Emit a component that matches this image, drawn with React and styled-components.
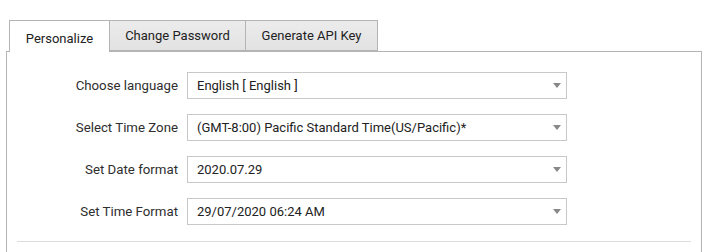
import React from "react";
import styled, { createGlobalStyle } from "styled-components";

const Global = createGlobalStyle`
  html, body { margin: 0; padding: 0; background: #fff; }
  body { font-family: Roboto, "Liberation Sans", Arial, sans-serif; font-size: 13px; color: #333; }
  * { box-sizing: border-box; }
`;

const Page = styled.div`
  padding: 20px 6px 0 6px;
  width: 708px;
`;

const TabList = styled.div`
  display: flex;
  margin-left: 3px;
  position: relative;
  z-index: 1;
`;

const Tab = styled.div`
  height: ${(p) => (p.$active ? "32px" : "31px")};
  margin-bottom: ${(p) => (p.$active ? "-1px" : "0")};
  padding: 0 15px;
  display: flex;
  align-items: center;
  justify-content: center;
  width: ${(p) => p.$w}px;
  border: 1px solid #b4b4b4;
  border-left-width: ${(p) => (p.$first ? "1px" : "0")};
  border-bottom: ${(p) => (p.$active ? "none" : "1px solid #b4b4b4")};
  background: ${(p) => (p.$active ? "#fff" : "linear-gradient(#ececec, #e2e2e2)")};
  color: #222;
  font-size: 13px;
  padding-top: ${(p) => (p.$active ? "3px" : "0")};
`;

const Panel = styled.div`
  border: 1px solid #b4b4b4;
  border-bottom: none;
  height: 202px;
  padding-top: 20px;
`;

const Form = styled.div`
  display: grid;
  grid-template-columns: 171px 380px;
  column-gap: 9px;
  row-gap: 15px;
  align-items: center;
`;

const Label = styled.div`
  text-align: right;
  color: #2e2e2e;
  font-size: 13.25px;
`;

const Select = styled.div`
  height: 27px;
  border: 1px solid #c8c8c8;
  display: flex;
  align-items: center;
  justify-content: space-between;
  padding: 0 5px 0 9px;
  color: #222;
  font-size: 13px;
  background: #fff;
`;

const Arrow = styled.span`
  width: 0;
  height: 0;
  border-left: 4px solid transparent;
  border-right: 4px solid transparent;
  border-top: 5px solid #888;
`;

const Divider = styled.div`
  margin: 16px 10px 0 10px;
  border-top: 1px solid #dcdcdc;
`;

const rows = [
  ["Choose language", "English [ English ]"],
  ["Select Time Zone", "(GMT-8:00) Pacific Standard Time(US/Pacific)*"],
  ["Set Date format", "2020.07.29"],
  ["Set Time Format", "29/07/2020 06:24 AM"],
];

export default function App() {
  return (
    <Page>
      <Global />
      <TabList>
        <Tab $active $first $w={101}>Personalize</Tab>
        <Tab $w={136}>Change Password</Tab>
        <Tab $w={132}>Generate API Key</Tab>
      </TabList>
      <Panel>
        <Form>
          {rows.map(([l, v]) => (
            <React.Fragment key={l}>
              <Label>{l}</Label>
              <Select>
                <span>{v}</span>
                <Arrow />
              </Select>
            </React.Fragment>
          ))}
        </Form>
        <Divider />
      </Panel>
    </Page>
  );
}
